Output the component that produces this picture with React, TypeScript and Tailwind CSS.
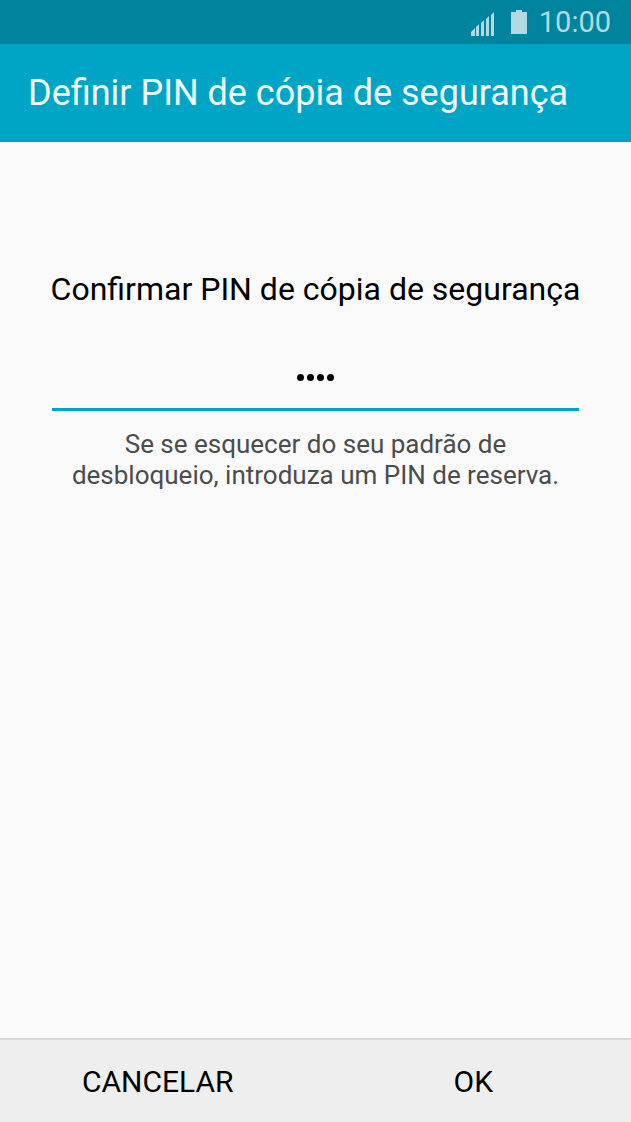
import { useState } from "react";

const StatusBar: React.FC = () => (
    <div className="flex h-11 items-center justify-end bg-[#00849e] pr-5 text-[#b2dae2]">
        <svg className="mt-1 h-6 w-6" viewBox="0 0 24 24" fill="currentColor" aria-label="Signal">
            <path d="M0 24v-4l4-4v8zM5 24v-9l3-3v12zM10 24V11l3-3v16zM15 24V7l3-3v20zM20 24V3l3-3v24z" />
        </svg>
        <svg className="ml-4 h-6 w-4" viewBox="0 0 16 24" fill="currentColor" aria-label="Battery">
            <path d="M5 0h6v2h5v22H0V2h5z" />
        </svg>
        <span className="ml-3 text-[29px] leading-none">10:00</span>
    </div>
);

const App: React.FC = () => {
    const [pin, setPin] = useState("1234");

    return (
        <div className="flex h-[1122px] w-[631px] flex-col bg-[#fafafa] font-['Roboto',sans-serif] text-black">
            <StatusBar />
            <header className="flex h-[98px] items-center bg-[#00a5c6] pl-7">
                <h1 className="text-[36px] whitespace-nowrap text-[#f0fafc]">Definir PIN de cópia de segurança</h1>
            </header>

            <main className="flex flex-1 flex-col items-center px-[52px] pt-[123px] text-center">
                <h2 className="text-[32px] leading-[48px] whitespace-nowrap">Confirmar PIN de cópia de segurança</h2>
                <button
                    className="mt-[41px] flex h-[57px] w-full items-start justify-center gap-[3px] border-b-[3px] border-[#00a5c6] pt-5"
                    aria-label="PIN"
                    onClick={() => setPin("")}
                >
                    {pin.split("").map((_, i) => (
                        <span key={i} className="size-[7px] rounded-full bg-black" />
                    ))}
                </button>
                <p className="mt-[18px] text-[26px] leading-[31px] whitespace-nowrap text-[#4c4c4c]">
                    Se se esquecer do seu padrão de
                    <br />
                    desbloqueio, introduza um PIN de reserva.
                </p>
            </main>

            <footer className="grid h-[84px] grid-cols-2 border-t-2 border-[#d8d8d8] bg-[#eeeeee] text-[30px]">
                <button>CANCELAR</button>
                <button>OK</button>
            </footer>
        </div>
    );
};

export default App;
